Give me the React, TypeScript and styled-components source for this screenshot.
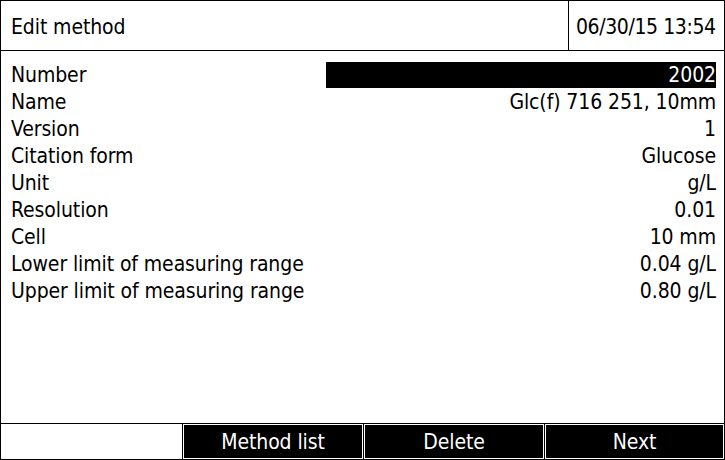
import React from "react";
import styled, { createGlobalStyle } from "styled-components";

const Global = createGlobalStyle`
  html, body { margin: 0; padding: 0; background: #fff; }
  body { font-family: "DejaVu Sans Condensed", "DejaVu Sans", sans-serif; }
`;

const Screen = styled.div`
  width: 725px;
  height: 460px;
  box-sizing: border-box;
  border: 1px solid #000;
  display: flex;
  flex-direction: column;
  color: #000;
  font-size: 21px;
  letter-spacing: -0.1px;
`;

const Header = styled.div`
  height: 49px;
  border-bottom: 1px solid #000;
  display: flex;
  align-items: stretch;
`;

const Title = styled.div`
  flex: 1;
  display: flex;
  align-items: center;
  padding: 3px 0 0 10px;
`;

const Clock = styled.div`
  width: 148px;
  border-left: 1px solid #000;
  display: flex;
  align-items: center;
  padding: 3px 0 0 7px;
  letter-spacing: -0.4px;
`;

const Body = styled.div`
  flex: 1;
  padding: 10px 8px 0 10px;
  display: flex;
  flex-direction: column;
`;

const Row = styled.div`
  height: 27px;
  display: grid;
  grid-template-columns: 315px 1fr;
  align-items: center;
`;

const Label = styled.div`
  white-space: nowrap;
`;

const Value = styled.div<{ $selected?: boolean }>`
  height: 26px;
  display: flex;
  align-items: center;
  justify-content: flex-end;
  white-space: nowrap;
  background: ${(p) => (p.$selected ? "#000" : "transparent")};
  color: ${(p) => (p.$selected ? "#fff" : "#000")};
`;

const Footer = styled.div`
  height: 35px;
  border-top: 1px solid #000;
  display: flex;
`;

const Spare = styled.div`
  width: 181px;
`;

const Keys = styled.div`
  flex: 1;
  background: #000;
  padding-left: 1px;
  display: grid;
  grid-template-columns: 180px 180px 1fr;
  gap: 1px;
`;

const Key = styled.div`
  border: 1px solid #fff;
  background: #000;
  color: #fff;
  display: flex;
  align-items: center;
  justify-content: center;
  padding-top: 1px;
`;

const rows: [string, string][] = [
  ["Number", "2002"],
  ["Name", "Glc(f) 716 251, 10mm"],
  ["Version", "1"],
  ["Citation form", "Glucose"],
  ["Unit", "g/L"],
  ["Resolution", "0.01"],
  ["Cell", "10 mm"],
  ["Lower limit of measuring range", "0.04 g/L"],
  ["Upper limit of measuring range", "0.80 g/L"],
];

export default function App() {
  return (
    <>
      <Global />
      <Screen>
        <Header>
          <Title>Edit method</Title>
          <Clock>06/30/15 13:54</Clock>
        </Header>
        <Body>
          {rows.map(([l, v], i) => (
            <Row key={l}>
              <Label>{l}</Label>
              <Value $selected={i === 0}>{v}</Value>
            </Row>
          ))}
        </Body>
        <Footer>
          <Spare />
          <Keys>
            <Key>Method list</Key>
            <Key>Delete</Key>
            <Key>Next</Key>
          </Keys>
        </Footer>
      </Screen>
    </>
  );
}
